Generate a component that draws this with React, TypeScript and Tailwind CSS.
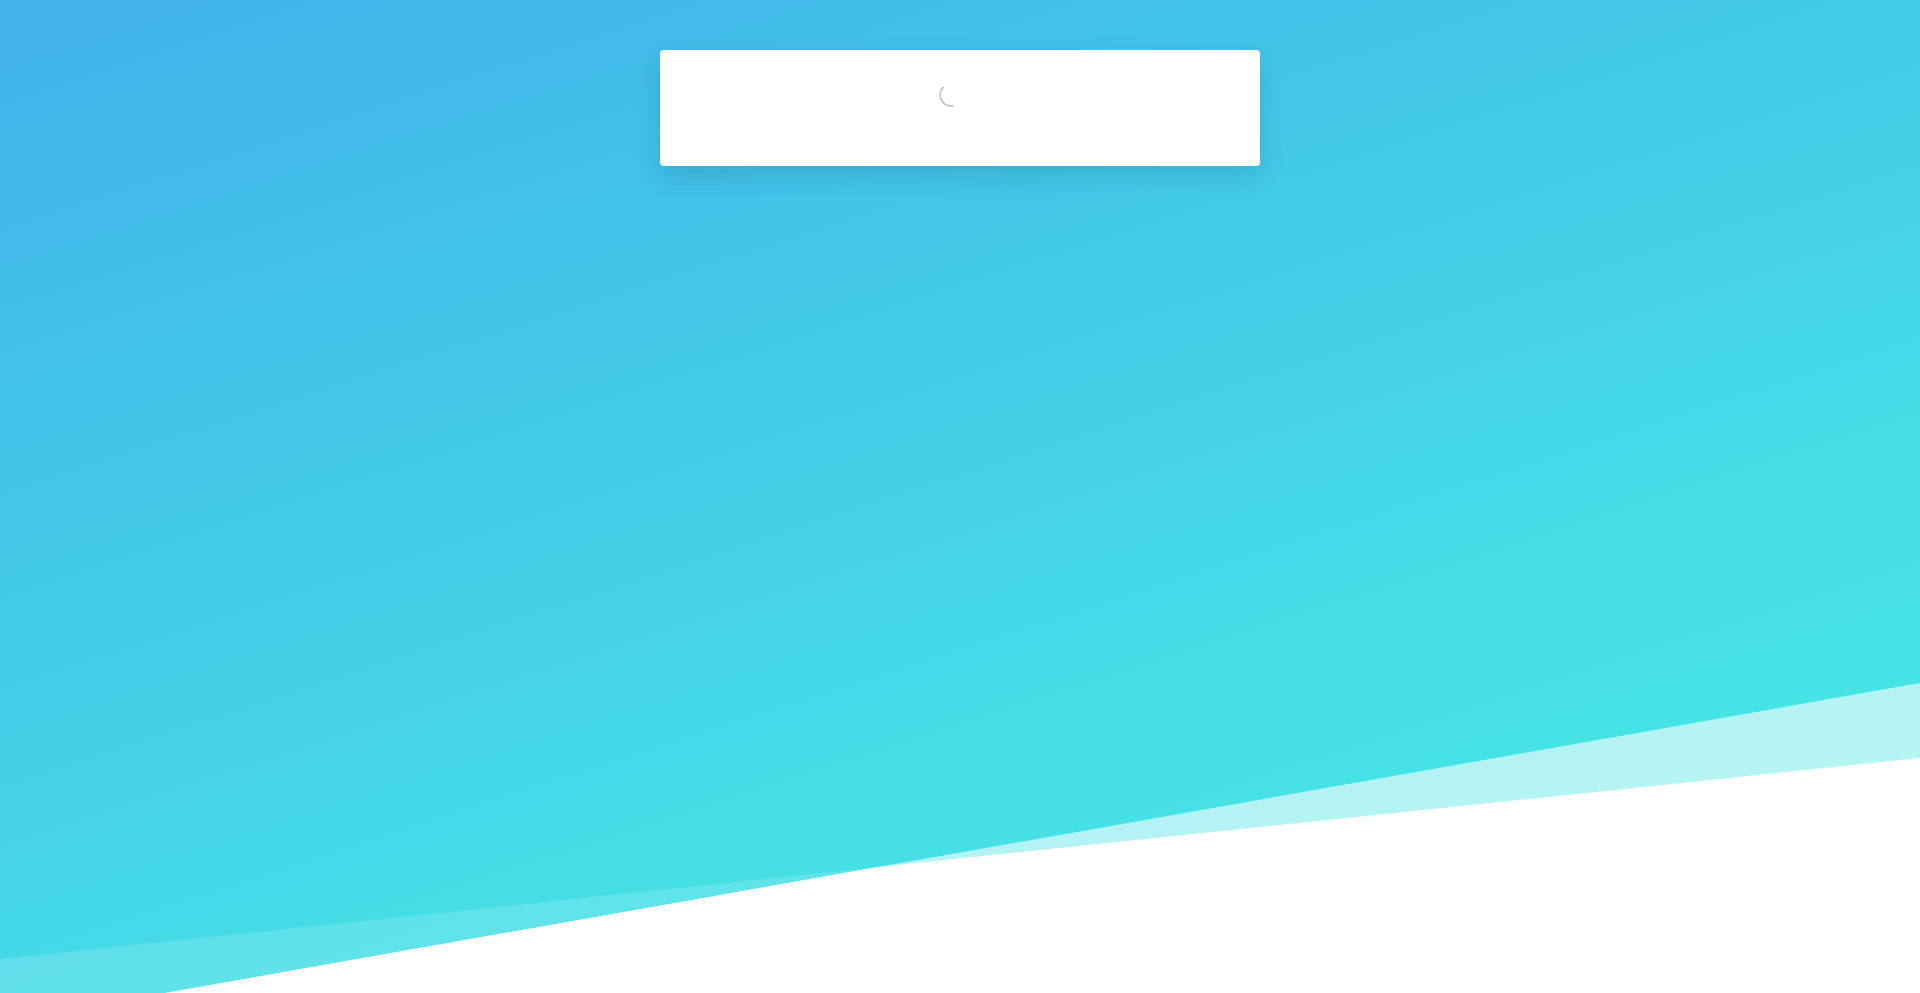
function Spinner() {
  return (
    <svg width="26" height="26" viewBox="0 0 24 24" fill="none" aria-label="Loading">
      <path
        d="M13.74 21.85 A10 10 0 0 1 4.93 4.93"
        stroke="#bdbdbd"
        strokeWidth="1.5"
        strokeLinecap="round"
      />
    </svg>
  );
}

function Waves() {
  return (
    <svg
      className="pointer-events-none absolute inset-0 h-full w-full"
      viewBox="0 0 1920 993"
      preserveAspectRatio="none"
      aria-hidden="true"
    >
      <polygon points="165,993 1920,683 1920,993" fill="#ffffff" fillOpacity="0.6" />
      <polygon points="0,959 1920,758 1920,993 0,993" fill="#ffffff" fillOpacity="0.15" />
      <polygon points="165,993 878,867 1920,758 1920,993" fill="#ffffff" />
    </svg>
  );
}

export default function App() {
  return (
    <main className="relative h-[993px] w-full overflow-hidden bg-[linear-gradient(162deg,#41b1ea_0%,#43c8e8_35%,#45dde6_65%,#46ece2_100%)] font-['Liberation_Sans',Arial,sans-serif]">
      <Waves />
      <div className="relative flex justify-center pt-[50px]">
        <section className="flex h-[116px] w-[600px] items-start justify-center rounded-[4px] bg-white shadow-[0_10px_24px_rgba(0,40,80,0.14)]">
          <div className="mr-[18px] mt-[32px]">
            <Spinner />
          </div>
        </section>
      </div>
    </main>
  );
}
